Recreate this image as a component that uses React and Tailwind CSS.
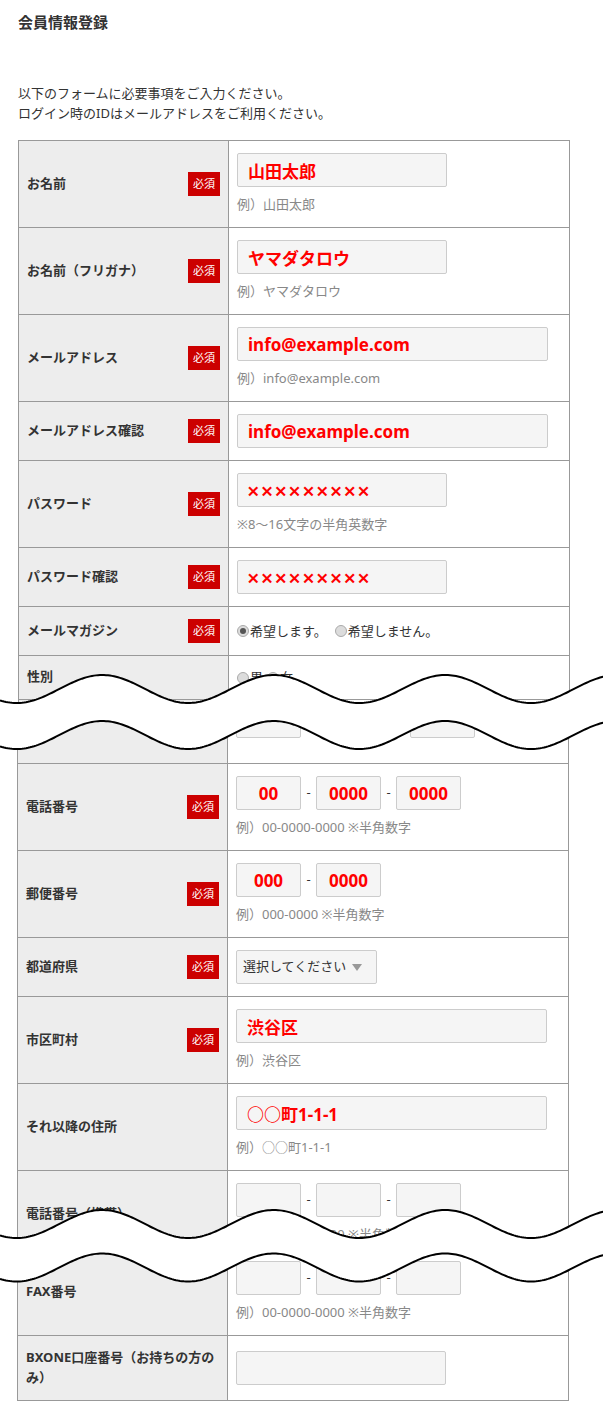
import React from 'react';

const Badge = () => (
  <span className="w-[32px] h-[24px] shrink-0 bg-[#cc0000] text-white text-[11px] leading-[24px] text-center">必須</span>
);

const Row = ({ label, req, children, top, labelClass = 'leading-[19px]' }) => (
  <div className={`flex border-b border-[#999] ${top ? 'border-t' : ''}`}>
    <div className="w-[210px] shrink-0 bg-[#ededed] border-r border-[#999] flex items-center justify-between gap-1 px-[8px] py-[12px]">
      <span className={`-translate-y-[1px] text-[13px] font-bold text-[#333] ${labelClass}`}>{label}</span>
      {req && <Badge />}
    </div>
    <div className="flex-1 pl-[8px] py-[12px] flex flex-col justify-center">{children}</div>
  </div>
);

const Field = ({ value = '', wide, narrow }) => (
  <input
    readOnly
    value={value}
    className={`h-[34px] border border-[#ccc] rounded-[2px] bg-[#f5f5f5] text-[17px] font-bold text-[#ff0000] outline-none ${
      narrow ? 'w-[65px] text-center' : wide ? 'w-[311px] pl-[10px]' : 'w-[210px] pl-[10px]'
    }`}
  />
);

const Note = ({ children }) => (
  <p className="mt-[7px] mb-[1px] text-[13px] leading-[20px] text-[#888]">{children}</p>
);

const Dash = () => <span className="w-[15px] text-center text-[13px] text-[#333]">-</span>;

const Tel = ({ a = '', b = '', c = '' }) => (
  <div className="flex items-center">
    <Field narrow value={a} />
    <Dash />
    <Field narrow value={b} />
    <Dash />
    <Field narrow value={c} />
  </div>
);

const Radio = ({ checked, children }) => (
  <span className="flex items-center">
    <span className="w-[12px] h-[12px] rounded-full border border-[#aaa] bg-[#dcdcdc] flex items-center justify-center">
      {checked && <span className="w-[6px] h-[6px] rounded-full bg-[#555]" />}
    </span>
    <span className="ml-[1px]">{children}</span>
  </span>
);

const Password = () => (
  <div className="w-[210px] h-[34px] border border-[#ccc] rounded-[2px] bg-[#f5f5f5] flex items-center pl-[9px] text-[22px] leading-none font-semibold text-[#ff0000] tracking-[1.2px]">
    {Array(9).fill('×').join('')}
  </div>
);

const wave = (cy, amp) => {
  const pts = [];
  for (let x = -4; x <= 608; x += 2) {
    pts.push([x, cy + amp * Math.cos((2 * Math.PI * (x - 16.5)) / 171.5)]);
  }
  return pts;
};

const toD = (pts) => pts.map((p, i) => `${i ? 'L' : 'M'}${p[0]} ${p[1].toFixed(2)}`).join(' ');

const Tear = ({ top, bottom }) => {
  const a = wave(top, 14);
  const b = wave(bottom, 14);
  const fill = toD(a) + ' ' + toD([...b].reverse()).replace('M', 'L') + ' Z';
  return (
    <g>
      <path d={fill} fill="#fff" />
      <path d={toD(a)} fill="none" stroke="#000" strokeWidth="2" />
      <path d={toD(b)} fill="none" stroke="#000" strokeWidth="2" />
    </g>
  );
};

export default function App() {
  return (
    <div className="relative w-[603px] h-[1401px] overflow-hidden bg-white text-[#333] font-['Noto_Sans','Noto_Sans_CJK_JP',sans-serif]">
      {/* section 1 */}
      <div className="h-[712px] overflow-hidden">
        <h1 className="pl-[18px] pt-[12px] text-[15px] leading-[21px] font-bold">会員情報登録</h1>
        <p className="pl-[18px] mt-[51px] text-[13px] leading-[19.5px]">
          以下のフォームに必要事項をご入力ください。
          <br />
          ログイン時のIDはメールアドレスをご利用ください。
        </p>
        <div className="ml-[18px] mt-[17px] w-[552px] border-x border-t border-[#999]">
          <Row label="お名前" req>
            <Field value="山田太郎" />
            <Note>例）山田太郎</Note>
          </Row>
          <Row label="お名前（フリガナ）" req>
            <Field value="ヤマダタロウ" />
            <Note>例）ヤマダタロウ</Note>
          </Row>
          <Row label="メールアドレス" req>
            <Field wide value="info@example.com" />
            <Note>例）info@example.com</Note>
          </Row>
          <Row label="メールアドレス確認" req>
            <Field wide value="info@example.com" />
          </Row>
          <Row label="パスワード" req>
            <Password />
            <Note>※8〜16文字の半角英数字</Note>
          </Row>
          <Row label="パスワード確認" req>
            <Password />
          </Row>
          <Row label="メールマガジン" req>
            <div className="flex items-center gap-[8px] text-[13px] leading-[19px]">
              <Radio checked>希望します。</Radio>
              <Radio>希望しません。</Radio>
            </div>
          </Row>
          <Row label="性別">
            <div className="flex items-center gap-[4px] text-[13px] leading-[19px]">
              <Radio>男</Radio>
              <Radio>女</Radio>
            </div>
          </Row>
          <Row label="">
            <Field narrow />
          </Row>
        </div>
      </div>

      {/* section 2 */}
      <div className="h-[536px] overflow-hidden">
        <div className="ml-[17px] w-[552px] border-x border-[#999]">
          <div className="-mt-[20px] flex border-b border-[#999]">
            <div className="w-[210px] shrink-0 bg-[#ededed] border-r border-[#999]" />
            <div className="flex-1 pl-[8px] pt-[12px] pb-[25px] flex items-center text-[13px]">
              <Field narrow />
              <span className="w-[22px] text-center">年</span>
              <Field narrow />
              <span className="w-[22px] text-center">月</span>
              <Field narrow />
              <span className="w-[22px] text-center">日</span>
            </div>
          </div>
          <Row label="電話番号" req>
            <Tel a="00" b="0000" c="0000" />
            <Note>例）00-0000-0000 ※半角数字</Note>
          </Row>
          <Row label="郵便番号" req>
            <div className="flex items-center">
              <Field narrow value="000" />
              <Dash />
              <Field narrow value="0000" />
            </div>
            <Note>例）000-0000 ※半角数字</Note>
          </Row>
          <Row label="都道府県" req>
            <div className="w-[141px] h-[34px] border border-[#ccc] rounded-[2px] bg-[#f5f5f5] flex items-center justify-between pl-[6px] pr-[14px] text-[13px]">
              <span>選択してください</span>
              <svg width="10" height="7" viewBox="0 0 10 7">
                <path d="M0 0 H10 L5 7 Z" fill="#999" />
              </svg>
            </div>
          </Row>
          <Row label="市区町村" req>
            <Field wide value="渋谷区" />
            <Note>例）渋谷区</Note>
          </Row>
          <Row label="それ以降の住所">
            <Field wide value="○○町1-1-1" />
            <Note>例）○○町1-1-1</Note>
          </Row>
          <Row label="電話番号（携帯）">
            <Tel />
            <Note>例）00-0000-0000 ※半角数字</Note>
          </Row>
        </div>
      </div>

      {/* section 3 */}
      <div className="ml-[17px] w-[552px] border-x border-[#999]">
        <Row label="FAX番号" top>
          <Tel />
          <Note>例）00-0000-0000 ※半角数字</Note>
        </Row>
        <Row
          label={
            <>
              BXONE口座番号（お持ちの方の
              <br />
              み）
            </>
          }
          labelClass="leading-[20px]"
        >
          <Field />
        </Row>
      </div>

      <svg className="absolute left-0 top-0 pointer-events-none" width="603" height="1401">
        <Tear top={689} bottom={735} />
        <Tear top={1224} bottom={1267.5} />
      </svg>
    </div>
  );
}
